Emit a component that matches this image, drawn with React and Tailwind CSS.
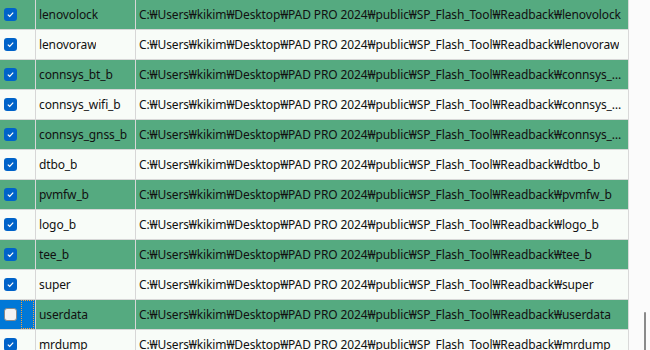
import React from "react";

const P = "C:₩Users₩kikim₩Desktop₩PAD PRO 2024₩public₩SP_Flash_Tool₩Readback₩";
const rows = [
  "lenovolock",
  "lenovoraw",
  "connsys_bt_b",
  "connsys_wifi_b",
  "connsys_gnss_b",
  "dtbo_b",
  "pvmfw_b",
  "logo_b",
  "tee_b",
  "super",
  "userdata",
  "mrdump",
];

function Check({ checked }) {
  if (!checked)
    return (
      <div className="w-[13px] h-[13px] rounded-[3px] border border-[#8a8a8a] bg-[#f3f3f3]" />
    );
  return (
    <div className="w-[13px] h-[13px] rounded-[3px] bg-[#0063c9] flex items-center justify-center">
      <svg width="9" height="9" viewBox="0 0 9 9">
        <path d="M1.8 4.6 L3.7 6.4 L7.2 2.6" stroke="#fff" strokeWidth="1.2" fill="none" />
      </svg>
    </div>
  );
}

export default function App() {
  return (
    <div
      className="w-[650px] h-[350px] overflow-hidden bg-[#fbfbfb] flex text-[12px] tracking-[-0.12px] text-[#111]"
      style={{ fontFamily: '"Noto Sans", "Noto Sans CJK KR", sans-serif' }}
    >
      <div className="w-[629px] flex flex-col border-r border-[#d9d9d9]">
        {rows.map((name, i) => {
          const green = i % 2 === 0 || i === 10;
          const sel = i === 10;
          const bg = green ? "bg-[#55aa80]" : "bg-[#f8fcf8]";
          return (
            <div key={name} className="flex h-[30px] shrink-0 border-b border-[#d7d7d7]">
              <div
                className={`w-[36px] shrink-0 relative flex items-center pl-[4px] border-r border-[#d7d7d7] ${
                  sel ? "bg-[#0078d7]" : bg
                }`}
              >
                <Check checked={!sel} />
                {sel && (
                  <div className="absolute left-[21px] top-0 w-[13px] h-[29px] border border-dotted border-[#f5a03c]" />
                )}
              </div>
              <div className={`w-[100px] shrink-0 flex items-center pl-[3px] border-r border-[#d7d7d7] ${bg}`}>
                <span className="truncate">{name}</span>
              </div>
              <div className={`flex-1 min-w-0 flex items-center pl-[3px] pr-[3px] ${bg}`}>
                <span className="truncate">{P + name}</span>
              </div>
            </div>
          );
        })}
      </div>
      <div className="flex-1 relative">
        <div className="absolute left-[15px] top-[312px] w-[2px] h-[40px] bg-[#8a8a8a] rounded-full" />
      </div>
    </div>
  );
}
